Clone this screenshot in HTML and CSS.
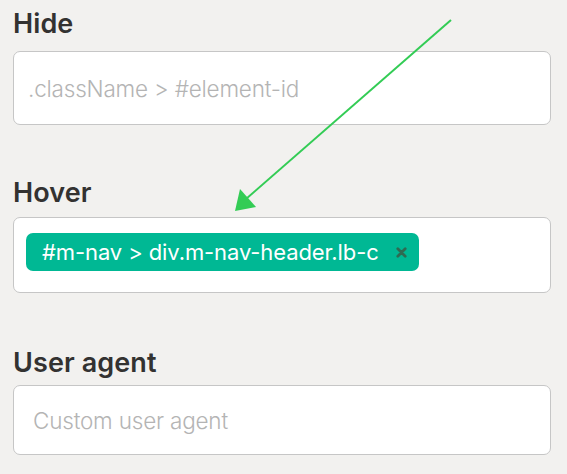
FILE: index.html
```html
<!DOCTYPE html>
<html>
<head>
<meta charset="utf-8">
<link rel="stylesheet" href="styles.css">
</head>
<body>
<div class="form">
  <div class="field">
    <label class="label">Hide</label>
    <div class="input"><span class="placeholder">.className &gt; #element-id</span></div>
  </div>
  <div class="field field-hover">
    <label class="label">Hover</label>
    <div class="input input-tags">
      <span class="tag">#m-nav &gt; div.m-nav-header.lb-c
        <svg class="tag-x" width="11" height="11" viewBox="0 0 11 11"><path d="M1.8 1.8 L9.2 9.2 M9.2 1.8 L1.8 9.2" stroke="#2e6b52" stroke-width="2.8" stroke-linecap="round"/></svg>
      </span>
    </div>
  </div>
  <div class="field field-ua">
    <label class="label">User agent</label>
    <div class="input input-ua"><span class="placeholder ph-ua">Custom user agent</span></div>
  </div>
</div>
<svg class="arrow" width="567" height="474" viewBox="0 0 567 474">
  <line x1="451" y1="20" x2="246" y2="199" stroke="#33cc55" stroke-width="2"/>
  <polygon points="235,211 240,189 256,207" fill="#33cc55"/>
</svg>
</body>
</html>
```
FILE: styles.css
```css
html, body {
  margin: 0;
  padding: 0;
  background: #f2f1ef;
}
body {
  font-family: Inter, "Noto Sans", sans-serif;
  width: 567px;
  height: 474px;
  overflow: hidden;
  position: relative;
}
.form {
  padding: 8px 16px 0 13px;
  display: flex;
  flex-direction: column;
}
.field {
  display: flex;
  flex-direction: column;
  gap: 11px;
}
.field-hover {
  margin-top: 52px;
  gap: 8px;
}
.field-ua {
  margin-top: 54px;
  gap: 6px;
}
.label {
  font-size: 27px;
  font-weight: 600;
  color: #333231;
  line-height: 32px;
  letter-spacing: 0.1px;
}
.input {
  box-sizing: border-box;
  height: 74px;
  background: #fff;
  border: 1.5px solid #c6c6c6;
  border-radius: 7px;
  display: flex;
  align-items: center;
  padding-left: 14px;
}
.input-ua {
  height: 70px;
  padding-left: 19px;
}
.placeholder {
  font-size: 22.5px;
  color: #b4b4b4;
  font-weight: 300;
  letter-spacing: -0.2px;
}
.input-tags {
  height: 76px;
  align-items: flex-start;
  padding-top: 15px;
  padding-left: 12px;
}
.tag {
  box-sizing: border-box;
  height: 38px;
  width: 393px;
  background: #00b894;
  border-radius: 7px;
  color: #fff;
  font-size: 22px;
  letter-spacing: -0.1px;
  display: flex;
  align-items: center;
  padding-left: 16px;
  justify-content: space-between;
  padding-right: 12px;
}
.tag-x {
  flex: none;
}
.arrow {
  position: absolute;
  left: 0;
  top: 0;
  pointer-events: none;
}
```
